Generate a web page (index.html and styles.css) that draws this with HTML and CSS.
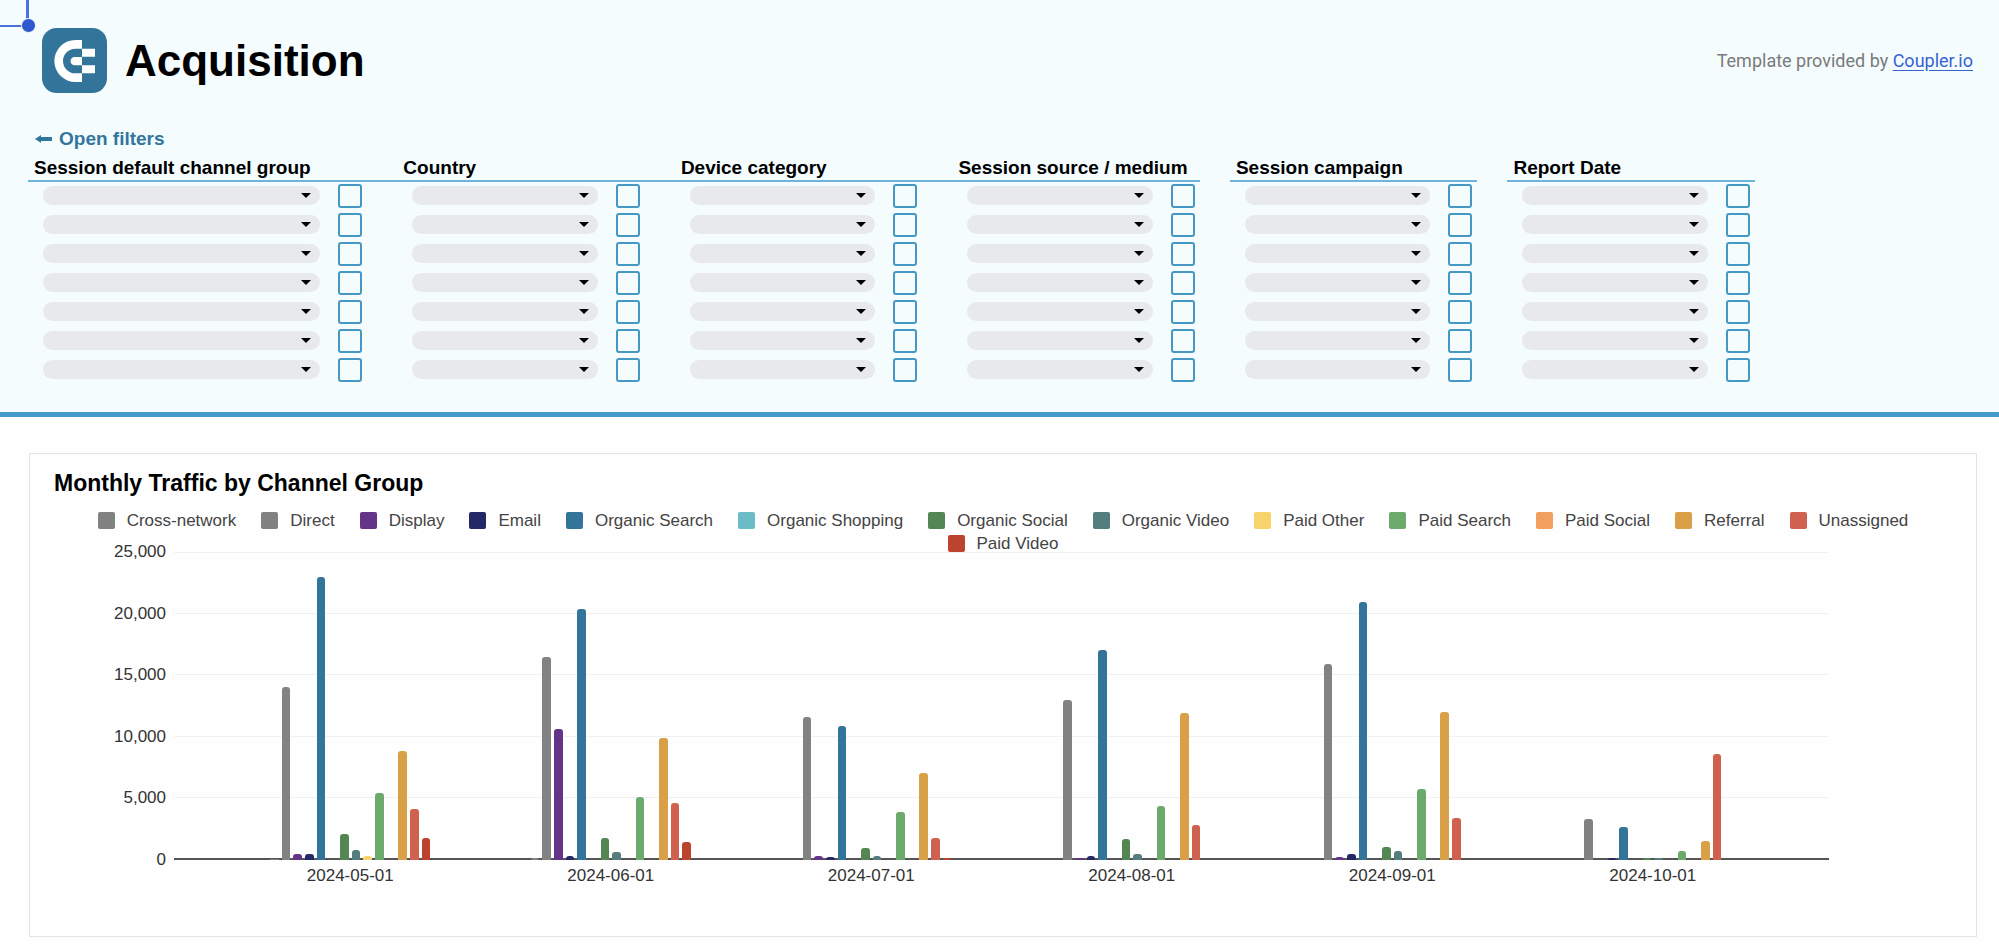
FILE: index.html
```
<!DOCTYPE html>
<html lang="en">
<head>
  <meta charset="utf-8">
  <meta name="viewport" content="width=device-width, initial-scale=1">
  <title>Acquisition</title>
  <link rel="stylesheet" href="styles.css">
</head>
<body>
  <header class="top">
    <div class="cell-selection" aria-hidden="true"></div>

    <div class="title-row">
      <svg class="logo" viewBox="0 0 195 195" role="img" aria-label="Coupler.io">
        <rect width="195" height="195" rx="44" fill="#33749b"/>
        <path fill="#fff" d="M120 36H100a63 63 0 0 0 0 126H120V136H100a37 37 0 0 1 0-74H120Z"/>
        <path fill="#fff" d="M120 62h39v24h-39zM120 112h39v24h-39zM120 87H98a12.500 12.500 0 0 0 0 25h22z"/>
      </svg>
      <h1 class="title">Acquisition</h1>
      <p class="credit">Template provided by <a class="credit-link" href="#">Coupler.io</a></p>
    </div>

    <button class="open-filters" type="button">
      <svg class="arrow-icon" viewBox="0 0 17 10" aria-hidden="true">
        <path fill="currentColor" d="M0 5 6 1v2h11v4H6v2z"/>
      </svg>
      Open filters
    </button>

    <form class="filters" id="filters"></form>
  </header>

  <main class="content">
    <section class="card">
      <h2 class="card-title">Monthly Traffic by Channel Group</h2>
      <ul class="legend" id="legend"></ul>
      <div class="chart">
        <div class="y-axis">
          <span>25,000</span>
          <span>20,000</span>
          <span>15,000</span>
          <span>10,000</span>
          <span>5,000</span>
          <span>0</span>
        </div>
        <div class="plot">
          <div class="grid-lines">
            <i></i><i></i><i></i><i></i><i></i><i class="baseline"></i>
          </div>
          <div class="groups" id="groups"></div>
        </div>
        <div class="x-axis" id="x-axis"></div>
      </div>
    </section>
  </main>

  <script src="script.js"></script>
</body>
</html>
```

FILE: styles.css
```
* {
  box-sizing: border-box;
}

body {
  margin: 0;
  background: #fefefe;
  color: #000;
  font-family: "Liberation Sans", Arial, sans-serif;
}

/* Header band */
.top {
  position: relative;
  padding: 28px 26px 31px 28px;
  background: #f4fcfe;
  border-bottom: 5px solid #4599cb;
}

.cell-selection {
  position: absolute;
  top: 0;
  left: 0;
  width: 29px;
  height: 27px;
  border: solid #4a72dc;
  border-width: 0 3px 2px 0;
}

.cell-selection::after {
  content: "";
  position: absolute;
  right: -10px;
  bottom: -8px;
  width: 13px;
  height: 13px;
  border: 1px solid #f4fcfe;
  border-radius: 50%;
  background: #2f58cd;
}

.title-row {
  display: flex;
  align-items: center;
  padding-left: 14px;
}

.logo {
  width: 65px;
  height: 65px;
}

.title {
  margin: 0 0 0 18px;
  font-size: 44px;
  line-height: 52px;
}

.credit {
  margin: 0 0 0 auto;
  color: #7a7a7a;
  font-family: Roboto, sans-serif;
  font-size: 18px;
  line-height: 24px;
}

.credit-link {
  color: #3763d0;
  text-underline-offset: 3px;
}

.open-filters {
  display: flex;
  align-items: center;
  gap: 7px;
  margin-top: 34px;
  padding: 0 0 0 7px;
  border: 0;
  background: none;
  color: #33769d;
  font: bold 19px/24px "Liberation Sans", Arial, sans-serif;
  cursor: pointer;
}

.arrow-icon {
  width: 17px;
  height: 10px;
}

/* Filters */
.filters {
  display: grid;
  grid-template-columns: 370fr repeat(5, 278fr);
  padding-right: 188px;
}

.filter {
  min-width: 0;
}

.filter-name {
  padding: 5px 0 0 6px;
  border-bottom: 2px solid #6eb3d9;
  font-size: 19px;
  font-weight: bold;
  line-height: 24px;
  white-space: nowrap;
}

.filter--split {
  padding-right: 30px;
}

.filter-rows {
  display: grid;
  gap: 6px;
  padding: 2px 35px 0 15px;
}

.filter--split .filter-rows {
  padding-right: 5px;
}

.filter-row {
  display: flex;
  align-items: center;
  gap: 18px;
  height: 23px;
}

.picker {
  position: relative;
  display: flex;
  flex: 1;
}

.picker::after {
  content: "";
  position: absolute;
  top: 7px;
  right: 9px;
  border: solid transparent;
  border-width: 5px 5px 0;
  border-top-color: #000;
  pointer-events: none;
}

.picker select {
  appearance: none;
  width: 100%;
  height: 19px;
  padding: 0 24px 0 10px;
  border: 0;
  border-radius: 10px;
  background: #e8e9ed;
  font: 13px/19px "Liberation Sans", Arial, sans-serif;
}

.tick {
  appearance: none;
  width: 24px;
  height: 24px;
  margin: 0;
  border: 2px solid #4598c4;
  border-radius: 3px;
}

.tick:checked {
  background: #4598c4;
}

/* Chart card */
.content {
  padding: 36px 22px 14px 29px;
}

.card {
  padding: 14px 24px 48px;
  border: 1px solid #e4e4e4;
}

.card-title {
  margin: 0;
  font-size: 23px;
  line-height: 30px;
}

.legend {
  position: relative;
  z-index: 1;
  display: flex;
  flex-wrap: wrap;
  justify-content: center;
  column-gap: 25px;
  margin: 11px 0 0;
  padding: 0;
  list-style: none;
  color: #444;
  font-size: 17px;
  line-height: 23px;
}

.legend-item {
  display: flex;
  align-items: center;
  gap: 12px;
}

.swatch {
  width: 17px;
  height: 17px;
  border-radius: 2px;
}

.chart {
  display: grid;
  grid-template-columns: 120px 1fr;
  margin-top: -3px;
  padding-right: 123px;
  color: #333;
  font-size: 17px;
  line-height: 24px;
}

.y-axis {
  display: flex;
  flex-direction: column;
  justify-content: space-between;
  margin: -12px 0;
  padding-right: 8px;
  text-align: right;
}

.plot {
  position: relative;
  height: 308px;
}

.grid-lines {
  position: absolute;
  inset: 0;
  display: flex;
  flex-direction: column;
  justify-content: space-between;
}

.grid-lines i {
  height: 1px;
  background: #f1f1f1;
}

.grid-lines .baseline {
  height: 2px;
  background: #555;
}

.groups {
  position: relative;
  display: flex;
  height: 100%;
  padding: 0 46px;
}

.group {
  display: flex;
  flex: 1;
  align-items: flex-end;
  gap: 3px;
  padding: 0 50px;
}

.bar {
  flex: 1;
  border-radius: 3px 3px 0 0;
}

.x-axis {
  display: flex;
  grid-column: 2;
  padding: 4px 46px 0;
  text-align: center;
}

.x-axis span {
  flex: 1;
}
```

FILE: script.js
```
const filters = [
  "Session default channel group",
  "Country",
  "Device category",
  "Session source / medium",
  "Session campaign",
  "Report Date",
];
const rowsPerFilter = 7;

const series = [
  ["Cross-network", "#828282"],
  ["Direct", "#828282"],
  ["Display", "#633488"],
  ["Email", "#242966"],
  ["Organic Search", "#33749b"],
  ["Organic Shopping", "#6bbcc7"],
  ["Organic Social", "#548654"],
  ["Organic Video", "#547e7e"],
  ["Paid Other", "#f7d36c"],
  ["Paid Search", "#6caa6c"],
  ["Paid Social", "#f2a05f"],
  ["Referral", "#d9a048"],
  ["Unassigned", "#cf614e"],
  ["Paid Video", "#bc442f"],
];

const axisMax = 25000;
const months = {
  "2024-05-01": [60, 14050, 450, 450, 22950, 0, 2120, 820, 360, 5420, 0, 8850, 4150, 1780],
  "2024-06-01": [190, 16480, 10620, 360, 20350, 0, 1780, 690, 0, 5080, 0, 9900, 4600, 1440],
  "2024-07-01": [0, 11580, 360, 250, 10870, 0, 960, 350, 0, 3900, 0, 7070, 1800, 150],
  "2024-08-01": [0, 12980, 150, 360, 17080, 0, 1710, 470, 0, 4390, 0, 11900, 2860, 0],
  "2024-09-01": [0, 15900, 220, 480, 20950, 0, 1090, 730, 0, 5800, 0, 12010, 3430, 0],
  "2024-10-01": [0, 3330, 0, 150, 2640, 0, 150, 150, 0, 710, 0, 1550, 8620, 0],
};

const filterRow = (name, n) => `
  <div class="filter-row">
    <div class="picker"><select aria-label="${name}, condition ${n}"><option value=""></option></select></div>
    <input class="tick" type="checkbox" aria-label="${name}, exclude ${n}">
  </div>`;

document.getElementById("filters").innerHTML = filters
  .map((name, i) => {
    const rows = Array.from({ length: rowsPerFilter }, (_, n) => filterRow(name, n + 1)).join("");
    return `<div class="filter${i > 2 ? " filter--split" : ""}" role="group" aria-label="${name}">
      <div class="filter-name">${name}</div>
      <div class="filter-rows">${rows}</div>
    </div>`;
  })
  .join("");

document.getElementById("legend").innerHTML = series
  .map(([name, color]) => `<li class="legend-item"><span class="swatch" style="background:${color}"></span>${name}</li>`)
  .join("");

document.getElementById("groups").innerHTML = Object.values(months)
  .map((values) => {
    const bars = values
      .map((v, i) => `<div class="bar" style="height:${(v / axisMax) * 100}%;background:${series[i][1]}"></div>`)
      .join("");
    return `<div class="group">${bars}</div>`;
  })
  .join("");

document.getElementById("x-axis").innerHTML = Object.keys(months)
  .map((month) => `<span>${month}</span>`)
  .join("");
```
